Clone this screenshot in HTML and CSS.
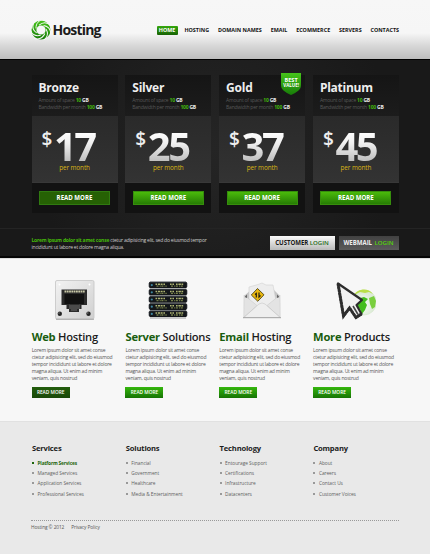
FILE: index.html
```html
<!DOCTYPE html>
<html lang="en">
<head>
<meta charset="utf-8">
<title>Hosting</title>
<link rel="stylesheet" href="styles.css">
</head>
<body>
<header class="header">
  <a class="logo">
    <svg width="20" height="20" viewBox="-10 -10 20 20">
      <defs>
        <linearGradient id="leaf" x1="0" y1="0" x2="0" y2="1"><stop offset="0" stop-color="#46c41a"/><stop offset="1" stop-color="#177c08"/></linearGradient>
        <path id="cut" d="M2.500-10.500C-2-9.800-5.200-7-5-1.500"/>
      </defs>
      <path fill="url(#leaf)" fill-rule="evenodd" d="M-9.500 0A9.500 9.500 0 0 1 9.500 0A9.500 9.500 0 0 1-9.500 0ZM-4.600 0A4.600 4.600 0 0 0 4.600 0A4.600 4.600 0 0 0-4.600 0Z"/>
      <g fill="none" stroke="#f7f7f7" stroke-width="1">
        <use href="#cut"/><use href="#cut" transform="rotate(51.400)"/><use href="#cut" transform="rotate(102.900)"/><use href="#cut" transform="rotate(154.300)"/><use href="#cut" transform="rotate(205.700)"/><use href="#cut" transform="rotate(257.100)"/><use href="#cut" transform="rotate(308.600)"/>
      </g>
    </svg>
    <span>Hosting</span>
  </a>
  <nav class="nav">
    <a class="active">HOME</a><a>HOSTING</a><a>DOMAIN NAMES</a><a>EMAIL</a><a>ECOMMERCE</a><a>SERVERS</a><a>CONTACTS</a>
  </nav>
</header>

<section class="plans">
  <div class="grid">
    <article class="plan">
      <div class="plan-head"><h2>Bronze</h2><p>Amount of space <i>10</i> <b>GB</b></p><p>Bandwidth per month <i>100</i> <b>GB</b></p></div>
      <div class="plan-price"><div class="price"><sup>$</sup><span>17</span></div><small>per month</small></div>
      <div class="plan-foot"><a class="btn-wide dim">READ MORE</a></div>
    </article>
    <article class="plan">
      <div class="plan-head"><h2>Silver</h2><p>Amount of space <i>10</i> <b>GB</b></p><p>Bandwidth per month <i>100</i> <b>GB</b></p></div>
      <div class="plan-price"><div class="price"><sup>$</sup><span>25</span></div><small>per month</small></div>
      <div class="plan-foot"><a class="btn-wide">READ MORE</a></div>
    </article>
    <article class="plan">
      <div class="badge">
        <svg width="20" height="22" viewBox="0 0 20 22"><path d="M0 0H20V12C20 17 16 19 10 22C4 19 0 17 0 12Z" fill="url(#leaf)"/></svg>
        <div class="badge-text"><span>BEST</span><em>VALUE!</em></div>
      </div>
      <div class="plan-head"><h2>Gold</h2><p>Amount of space <i>10</i> <b>GB</b></p><p>Bandwidth per month <i>100</i> <b>GB</b></p></div>
      <div class="plan-price"><div class="price"><sup>$</sup><span>37</span></div><small>per month</small></div>
      <div class="plan-foot"><a class="btn-wide">READ MORE</a></div>
    </article>
    <article class="plan">
      <div class="plan-head"><h2>Platinum</h2><p>Amount of space <i>10</i> <b>GB</b></p><p>Bandwidth per month <i>100</i> <b>GB</b></p></div>
      <div class="plan-price"><div class="price"><sup>$</sup><span>45</span></div><small>per month</small></div>
      <div class="plan-foot"><a class="btn-wide">READ MORE</a></div>
    </article>
  </div>
  <div class="strip">
    <p><b>Lorem ipsum dolor sit amet conse</b> ctetur adipisicing elit, sed do eiusmod tempor<br>incididunt ut labore et dolore magna aliqua.</p>
    <div class="logins">
      <a class="login light">CUSTOMER <b>LOGIN</b></a>
      <a class="login dark">WEBMAIL <b>LOGIN</b></a>
    </div>
  </div>
</section>

<section class="features grid">
  <article class="feature">
    <svg class="icon" viewBox="0 0 40 40">
      <defs><linearGradient id="steel" x1="0" y1="0" x2="1" y2="1"><stop offset="0" stop-color="#f2f2f2"/><stop offset="1" stop-color="#d0d0d0"/></linearGradient></defs>
      <rect x=".5" y=".5" width="38.5" height="38.5" rx="1.5" fill="url(#steel)" stroke="#c4c4c4" stroke-width=".8"/>
      <path d="M1 39.3H39" stroke="#999" stroke-width=".8"/>
      <path d="M6.500 9.500H32V25H26.500V29H24V32H14V29H11.500V25H6.500Z" fill="#2b2b2b"/>
      <path d="M9.500 14H29V24H24V28H15V24H9.500Z" fill="#111"/>
      <path d="M14 24.500H25V29H22V31H16V29H14Z" fill="#4b4b4b"/>
      <path d="M9.500 11.500H30" stroke="#c9c9a8" stroke-width="2" stroke-dasharray="1.800 .5"/>
      <circle cx="4.800" cy="33.800" r="2.200" fill="#252525"/><circle cx="33.500" cy="33.800" r="2.200" fill="#252525"/>
      <circle cx="4" cy="33" r=".7" fill="#888"/><circle cx="32.800" cy="33" r=".7" fill="#888"/>
      <circle cx="4.500" cy="4.500" r="1" fill="#fff"/><circle cx="34.500" cy="4.500" r="1" fill="#fff"/>
    </svg>
    <h3><b>Web</b> Hosting</h3>
    <p>Lorem ipsum dolor sit amet conse<br>ctetur adipisicing elit, sed do eiusmod<br>tempor incididunt ut labore et dolore<br>magna aliqua. Ut enim ad minim<br>veniam, quis nostrud</p>
    <a class="btn-small dim">READ MORE</a>
  </article>
  <article class="feature">
    <svg class="icon" viewBox="0 0 40 40">
      <defs><g id="rack">
        <rect x=".7" y="1" width="38.600" height="5" rx="1" fill="#30353b"/><rect x="1.500" y=".2" width="37" height="6.600" rx=".6" fill="#14171a"/>
        <path d="M2 .5H38" stroke="#565d63" stroke-width=".6"/>
        <circle cx="3.800" cy="3.600" r="1.100" fill="#3f87a0"/>
        <path d="M7.500 2.700H17M22 2.700H26M28 2.700H36" stroke="#aeb573" stroke-width="1.500" stroke-dasharray="1.600 .8 2.500 .6"/>
        <path d="M8.500 4.700H19M23 4.700H36" stroke="#737e48" stroke-width="1.300" stroke-dasharray="2 1.200 1 .7"/>
      </g></defs>
      <use href="#rack" y="1.500"/><use href="#rack" y="8.700"/><use href="#rack" y="15.900"/><use href="#rack" y="23.100"/><use href="#rack" y="30.300"/>
      <path d="M2 38H38" stroke="#777" stroke-width=".7"/>
    </svg>
    <h3><b>Server</b> Solutions</h3>
    <p>Lorem ipsum dolor sit amet conse<br>ctetur adipisicing elit, sed do eiusmod<br>tempor incididunt ut labore et dolore<br>magna aliqua. Ut enim ad minim<br>veniam, quis nostrud</p>
    <a class="btn-small">READ MORE</a>
  </article>
  <article class="feature">
    <svg class="icon" viewBox="0 0 40 40">
      <path d="M2 16L10 9L30 8L38 16V37H2Z" fill="#c4c4c4"/>
      <path d="M7 7L16 4.500L20 3L24 5H31L34 21L20 30L7 25Z" fill="#ededed" stroke="#d2d2d2" stroke-width=".6"/>
      <path d="M2 15L15 25.500L1.800 37.500ZM38 15L25 25.500L38.200 37.500Z" fill="#e3e3e3" stroke="#c6c6c6" stroke-width=".5"/>
      <path d="M1.800 37.500L17 24Q20 22 23 24L38.200 37.500Z" fill="#eee" stroke="#c7c7c7" stroke-width=".6"/>
      <path d="M1 37.700H39" stroke="#9d9d9d" stroke-width=".9"/>
      <path d="M2.500 17L5 14.500V18M37.500 17L35 14.500V18" fill="#666"/>
      <path d="M15.500 8.500L22 14.800L15.800 21.300L9.300 15Z" fill="#eab80e" stroke="#3c350d" stroke-width=".8"/>
      <path d="M14.300 17.500V13.500L13 14.500M17 12.500V17L18.500 15.500" fill="none" stroke="#252010" stroke-width="1.200"/>
    </svg>
    <h3><b>Email</b> Hosting</h3>
    <p>Lorem ipsum dolor sit amet conse<br>ctetur adipisicing elit, sed do eiusmod<br>tempor incididunt ut labore et dolore<br>magna aliqua. Ut enim ad minim<br>veniam, quis nostrud</p>
    <a class="btn-small">READ MORE</a>
  </article>
  <article class="feature">
    <svg class="icon" viewBox="0 0 40 40">
      <defs><radialGradient id="sea" cx=".4" cy=".6"><stop offset="0" stop-color="#fff"/><stop offset="1" stop-color="#dcebd6"/></radialGradient></defs>
      <circle cx="28" cy="22.500" r="12.500" fill="url(#sea)" stroke="#d8ead0" stroke-width=".7"/>
      <path d="M18 15C21 9 32 7 37 14L33 12L29 13L24 12Z" fill="#b9df48"/>
      <path d="M21 19L28 17L32 19L29 22L31 25L29 30L26 34L24 29L19 27L17 23Z" fill="#43bd1d"/>
      <path d="M33 18L38 16L40 21L39 27L36 29L34 24Z" fill="#79cf3e"/>
      <path d="M2 3.500L7.500 36L13.500 28L20 37.500L25.500 34L20.500 25L26 20Z" fill="#f2f2f2" stroke="#2d2d2d" stroke-width="2.200" stroke-linejoin="round"/>
      <path d="M2 3.500L7.500 36L13.500 28L20 37.500L25.500 34" fill="none" stroke="#2d2d2d" stroke-width="3" stroke-dasharray="2.800 .3"/>
      <path d="M17 26L22 34.500" stroke="#444" stroke-width="1.600"/>
    </svg>
    <h3><b>More</b> Products</h3>
    <p>Lorem ipsum dolor sit amet conse<br>ctetur adipisicing elit, sed do eiusmod<br>tempor incididunt ut labore et dolore<br>magna aliqua. Ut enim ad minim<br>veniam, quis nostrud</p>
    <a class="btn-small">READ MORE</a>
  </article>
</section>

<footer class="footer">
  <div class="grid links">
    <div><h4>Services</h4><ul><li class="current">Platform Services</li><li>Managed Services</li><li>Application Services</li><li>Professional Services</li></ul></div>
    <div><h4>Solutions</h4><ul><li>Financial</li><li>Government</li><li>Healthcare</li><li>Media &amp; Entertainment</li></ul></div>
    <div><h4>Technology</h4><ul><li>Entourage Support</li><li>Certifications</li><li>Infrastructure</li><li>Datacenters</li></ul></div>
    <div><h4>Company</h4><ul><li>About</li><li>Careers</li><li>Contact Us</li><li>Customer Voices</li></ul></div>
  </div>
  <div class="legal"><span>Hosting © 2012</span><span>Privacy Policy</span></div>
</footer>
</body>
</html>
```

FILE: styles.css
```css
* { box-sizing: border-box; margin: 0; padding: 0; }
body { width: 430px; height: 554px; overflow: hidden; background: #f7f7f7; color: #1c1c1c; font-family: "Open Sans", "Liberation Sans", sans-serif; }
i, em { font-style: normal; }
a { white-space: nowrap; }

.header { height: 60px; padding: 0 31px 0 31px; display: flex; justify-content: space-between; border-bottom: 1px solid #000; background: linear-gradient(#f7f7f7 0, #f6f6f6 33px, #d7d7d7 46px, #bdbdbd 59px); }
.logo { display: flex; gap: 1.500px; padding-top: 20px; font-size: 14px; font-weight: 700; line-height: 19px; letter-spacing: -0.8px; }
.nav { display: flex; gap: 8.800px; height: 9px; margin-top: 26px; font-size: 5.400px; font-weight: 700; line-height: 9px; letter-spacing: .01px; color: #111; }
.nav .active { width: 21px; margin-right: -2px; border-radius: 1px; text-align: center; color: #fff; background: linear-gradient(#35a80c, #176205); }

.grid { display: grid; grid-template-columns: repeat(4, 86px); gap: 7.800px; }

.plans { height: 198px; padding: 15px 0 0 31.500px; border-bottom: 2px solid #050505; background: linear-gradient(#242424, #242424) 0 168px / 100% 1px no-repeat, radial-gradient(circle at 50% 45%, #252525, #191919 75%); }
.plan { position: relative; height: 138px; background: #121212; }
.plan-head { height: 41px; padding: 4px 0 0 7px; background: linear-gradient(#151515, #1c1c1c); }
.plan-head h2 { font-size: 12px; line-height: 17px; font-weight: 700; letter-spacing: -.25px; color: #eee; }
.plan-head p { font-size: 5px; line-height: 7px; letter-spacing: -.22px; color: #585858; white-space: nowrap; }
.plan-head h2 + p { margin-top: .5px; }
.plan-head i { font-weight: 700; color: #43b80e; }
.plan-head b { color: #eee; }
.plan-price { height: 67px; background: linear-gradient(#2a2a2a, #333); border-bottom: 1px solid #383838; text-align: center; }
.price { display: flex; height: 48.500px; padding-left: 10px; }
.price sup { width: 12.500px; font-size: 19px; line-height: 46px; font-weight: 600; text-align: left; color: #eee; }
.price span { height: 39px; margin-top: 9.500px; font-size: 40px; line-height: 39px; font-weight: 700; letter-spacing: -2.500px; padding-right: 3px; color: transparent; background: linear-gradient(#fff 6px, #f0f0f0 17px, #bcbcbc 36px); background-clip: text; -webkit-background-clip: text; }
.plan-price small { display: block; font-size: 6.400px; line-height: 6px; letter-spacing: -.1px; color: #d9b416; }
.plan-foot { padding: 8px 7.500px; }
.btn-wide { display: block; height: 14px; border: 1px solid #368e0c; font-size: 6.100px; line-height: 12px; font-weight: 700; text-align: center; color: #fff; background: linear-gradient(#4aba0b, #267c04); }
.btn-wide.dim { background: #266104; border-color: #307a10; }
.badge { position: absolute; top: -2px; right: 4px; width: 20px; height: 22px; }
.badge svg { display: block; }
.badge-text { position: absolute; inset: 4px 0 0; font-size: 5.500px; line-height: 6px; font-weight: 700; color: #fff; text-align: center; }
.badge-text span, .badge-text em { display: block; }
.badge-text em { font-size: 4.500px; line-height: 5px; }

.strip { display: flex; justify-content: space-between; width: 367px; margin-top: 15px; padding-top: 8px; }
.strip p { padding-top: .5px; font-size: 5px; line-height: 7px; letter-spacing: -.22px; color: #ccc; white-space: nowrap; }
.strip p b { color: #45b90a; }
.logins { display: flex; gap: 4px; }
.login { height: 14px; font-size: 6.100px; line-height: 14px; font-weight: 700; letter-spacing: -.05px; text-align: center; }
.login b { font-weight: 600; }
.light { width: 65px; color: #181818; background: linear-gradient(#fafafa, #b9b9b9); }
.light b { color: #246b16; }
.dark { width: 60px; color: #eee; background: linear-gradient(#414141, #5b5b5b); }
.dark b { margin-left: 1px; color: #57d60b; }

.features { height: 164px; padding: 21px 0 0 31.700px; border-top: 1px solid #ddd; border-bottom: 1px solid #e1e1e1; }
.feature { display: flex; flex-direction: column; align-items: flex-start; }
.icon { width: 40px; height: 40px; margin-left: 23px; }
.feature h3 { margin-top: 8px; font-size: 11.200px; line-height: 17px; font-weight: 600; letter-spacing: -.25px; white-space: nowrap; }
.feature h3 b { font-weight: 700; color: #195d0e; }
.feature p { margin-top: 2px; font-size: 5px; line-height: 7px; letter-spacing: -.18px; color: #555; white-space: nowrap; }
.btn-small { width: 38px; height: 11px; margin-top: 5px; font-size: 4.800px; line-height: 10.500px; font-weight: 600; text-align: center; color: #fff; background: linear-gradient(#35b70d, #167404); }
.btn-small.dim { background: linear-gradient(#235d0d, #194909); }

.footer { height: 132px; padding: 20px 31px 0; background: #e9e9e9; }
.links { height: 77px; padding-left: 1px; }
.links h4 { font-size: 7.600px; line-height: 12px; font-weight: 700; letter-spacing: -.18px; }
.links ul { list-style: none; margin-top: 4px; }
.links li { display: flex; align-items: center; gap: 3.500px; height: 10.200px; font-size: 4.800px; letter-spacing: -.03px; color: #606060; white-space: nowrap; }
.links li::before { content: ""; width: 2px; height: 2px; background: #999; }
.links .current { color: #1c640b; font-weight: 700; letter-spacing: -.15px; }
.links .current::before { background: #1c640b; }
.legal { display: flex; gap: 7px; margin-top: 1px; padding-top: 3px; border-top: 1px dotted #999; font-size: 4.800px; line-height: 7px; letter-spacing: -.1px; color: #555; }
```
